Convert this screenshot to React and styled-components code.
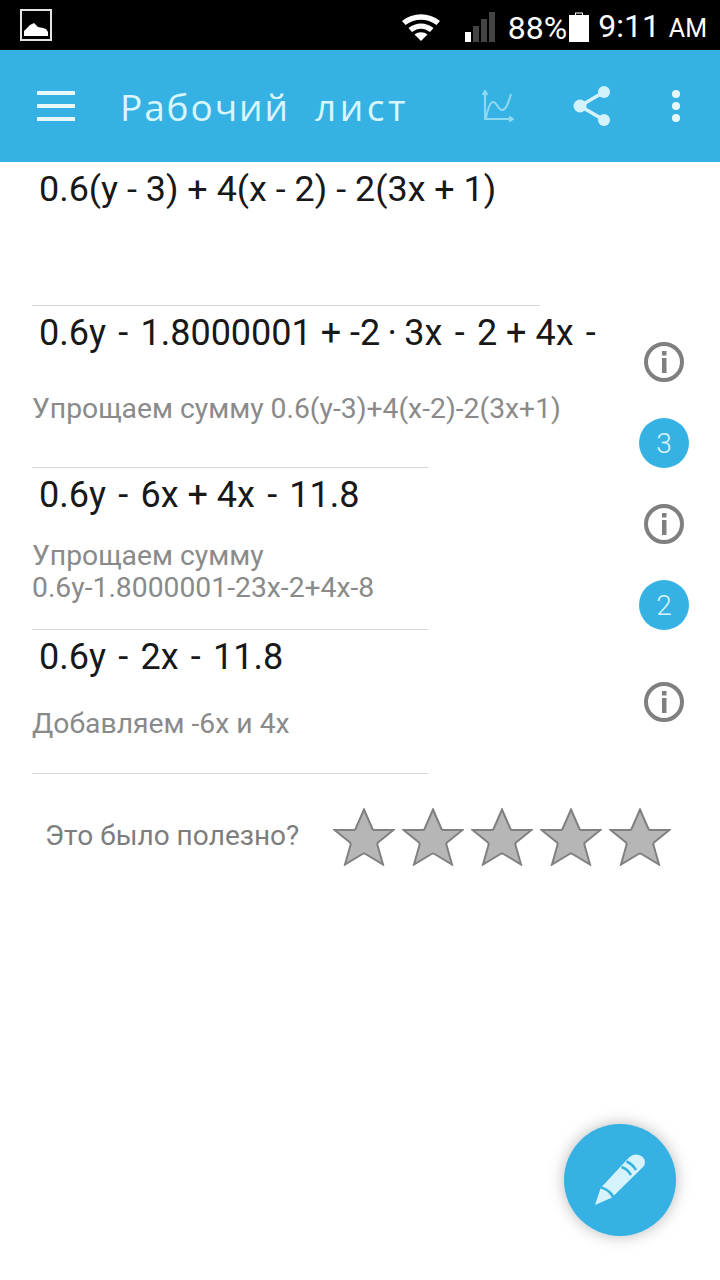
import styled, { createGlobalStyle } from "styled-components";

// minus signs in the steps sit wider apart than the plus signs
const spaced = (expr) => expr.replace(/ - /g, "\u2004-\u2004").replace(/ -$/, "\u2004-");

const steps = [
  {
    expr: "0.6y - 1.8000001 + -2\u2009·\u20093x - 2 + 4x -",
    desc: ["Упрощаем сумму 0.6(y-3)+4(x-2)-2(3x+1)"],
    height: 162,
    ruleWidth: 508,
    descTop: 39,
    infoTop: 37,
    badge: 3,
  },
  {
    expr: "0.6y - 6x + 4x - 11.8",
    desc: ["Упрощаем сумму", "0.6y-1.8000001-23x-2+4x-8"],
    height: 162,
    ruleWidth: 396,
    descTop: 24,
    infoTop: 37,
    badge: 2,
  },
  {
    expr: "0.6y - 2x - 11.8",
    desc: ["Добавляем -6x и 4x"],
    height: 144,
    ruleWidth: 396,
    descTop: 30,
    infoTop: 53,
  },
];

function App() {
  return (
    <Page>
      <GlobalStyle />
      <StatusBar>
        <svg width="34" height="34" viewBox="0 0 34 34">
          <rect x="2" y="2" width="30" height="30" fill="none" stroke="#e4e4e4" strokeWidth="2" />
          <path d="M5 28 V23 L11 17 L15 15 L19 19 L24 20 L27 21 L29 24 V28 Z" fill="#fff" />
        </svg>
        <StatusRight>
          <svg width="40" height="30" viewBox="0 0 40 30">
            <path d="M1 9 C12 0 28 0 39 9 L35.5 13 C26 6 14 6 4.500 13 Z" fill="#fff" />
            <path d="M7.500 16 C15 10 25 10 32.500 16 L29 20 C23 15.500 17 15.500 11 20 Z" fill="#fff" />
            <path d="M13.500 22.500 C17.500 19.500 22.500 19.500 26.500 22.500 L20 29 Z" fill="#fff" />
          </svg>
          <SignalBars>
            <svg width="30" height="30" viewBox="0 0 30 30">
              <rect x="0" y="20" width="6" height="10" fill="#fff" />
              <rect x="8" y="14" width="6" height="16" fill="#444" />
              <rect x="16" y="7" width="6" height="23" fill="#444" />
              <rect x="24" y="0" width="6" height="30" fill="#444" />
            </svg>
          </SignalBars>
          <Percent>88%</Percent>
          <svg width="20" height="30" viewBox="0 0 20 30">
            <path d="M6 0.500 H14 V3 H20 V30 H0 V3 H6 Z M7 1.500 V3 H13 V1.500 Z" fill="#fff" fillRule="evenodd" />
          </svg>
          <Clock>
            9:11<Meridiem>AM</Meridiem>
          </Clock>
        </StatusRight>
      </StatusBar>

      <AppBar>
        <MenuIcon>
          <span />
          <span />
          <span />
        </MenuIcon>
        <Title>
          <TitleWord $spacing={1.9}>Рабочий</TitleWord>
          <TitleWord $spacing={3.6}>лист</TitleWord>
        </Title>
        <Actions>
          <svg width="32" height="32" viewBox="0 0 32 32" fill="none" stroke="#8fd8f2" strokeWidth="2">
            <path d="M3 1 V29 H31" />
            <path d="M0.500 5 L3 1 L5.500 5 M27 26.500 L31 29 L27 31.500" />
            <path d="M4 28 C6 18 8 12 11 12 C15 12 16 20 20 20 C25 20 27 10 29 4" />
          </svg>
          <svg width="40" height="42" viewBox="0 0 40 42">
            <path d="M32 7 L8 21 L32 35" fill="none" stroke="#d4f2fb" strokeWidth="3.500" />
            <circle cx="32" cy="7" r="6" fill="#d4f2fb" />
            <circle cx="8" cy="21" r="6.500" fill="#d4f2fb" />
            <circle cx="32" cy="35" r="6" fill="#d4f2fb" />
          </svg>
          <svg width="12" height="36" viewBox="0 0 12 36">
            <circle cx="6" cy="6" r="4" fill="#e8f8fd" />
            <circle cx="6" cy="18" r="4" fill="#e8f8fd" />
            <circle cx="6" cy="30" r="4" fill="#e8f8fd" />
          </svg>
        </Actions>
      </AppBar>

      <Problem>0.6(y - 3) + 4(x - 2) - 2(3x + 1)</Problem>

      {steps.map((step) => (
        <Step key={step.expr} $height={step.height}>
          <StepMain>
            <Rule $width={step.ruleWidth} />
            <Expression>{spaced(step.expr)}</Expression>
            <Description $top={step.descTop}>
              {step.desc.map((line) => (
                <div key={line}>{line}</div>
              ))}
            </Description>
          </StepMain>
          <StepAside $top={step.infoTop}>
            <InfoIcon>
              <svg width="40" height="40" viewBox="0 0 40 40">
                <circle cx="20" cy="20" r="18" fill="none" stroke="#7f7f7f" strokeWidth="4" />
                <rect x="18" y="9" width="4.500" height="4.500" fill="#7f7f7f" />
                <rect x="18" y="16" width="4.500" height="15" fill="#7f7f7f" />
              </svg>
            </InfoIcon>
            {step.badge && <Badge>{step.badge}</Badge>}
          </StepAside>
        </Step>
      ))}

      <ClosingRule />

      <RatingRow>
        <RatingLabel>Это было полезно?</RatingLabel>
        <Stars>
          {[1, 2, 3, 4, 5].map((n) => (
            <svg key={n} width="62" height="58" viewBox="0 0 62 58">
              <path
                d="M31 1.500 L39.500 21 Q40 22 41.500 22 L60.500 22 L45 34.500 Q44 35.500 44.500 37 L50 56.500 L32.500 46 Q31 45 29.500 46 L12 56.500 L17.500 37 Q18 35.500 17 34.500 L1.500 22 L20.500 22 Q22 22 22.500 21 Z"
                fill="#b6b6b6"
                stroke="#808080"
                strokeWidth="2"
              />
            </svg>
          ))}
        </Stars>
      </RatingRow>

      <Fab>
        <svg width="112" height="112" viewBox="0 0 112 112">
          <path d="M31 81 L36.500 64.500 Q43.500 66 48 73.500 Z" fill="#d6f3fc" />
          <path d="M38 62.500 L65 33.500 Q69.500 29.500 75 31 Q81 33 81 38.500 Q81 41 79 43 L50 71.500 Q46 65 38 62.500 Z" fill="#d6f3fc" />
          <path d="M57.500 43 Q63.500 45 67 51 M62.500 37.500 Q68.500 40 72 46" fill="none" stroke="#35b2e3" strokeWidth="2.500" />
        </svg>
      </Fab>
    </Page>
  );
}

export default App;

const GlobalStyle = createGlobalStyle`
  html, body {
    margin: 0;
    padding: 0;
    background: #fff;
  }
`;

const Page = styled.div`
  position: relative;
  width: 720px;
  height: 1280px;
  overflow: hidden;
  background: #fff;
  font-family: Roboto, "Noto Sans", sans-serif;
  font-kerning: none;
`;

const StatusBar = styled.div`
  height: 50px;
  box-sizing: border-box;
  padding: 8px 13px 0 19px;
  display: flex;
  justify-content: space-between;
  align-items: flex-start;
  background: #000;
  color: #fff;
`;

const StatusRight = styled.div`
  display: flex;
  align-items: center;
  margin-top: 2px;
`;

const SignalBars = styled.div`
  display: flex;
  margin-left: 24px;
`;

const Percent = styled.span`
  margin: 1px 2px 0 13px;
  font-size: 32px;
  line-height: 30px;
`;

const Clock = styled.span`
  margin: 1px 0 0 9px;
  font-size: 32px;
  line-height: 30px;
`;

const Meridiem = styled.span`
  margin-left: 9px;
  font-size: 25px;
`;

const AppBar = styled.div`
  height: 112px;
  box-sizing: border-box;
  padding-left: 37px;
  display: flex;
  align-items: center;
  background: #35b2e3;
`;

const MenuIcon = styled.div`
  width: 38px;
  display: flex;
  flex-direction: column;
  gap: 9px;

  span {
    display: block;
    height: 4px;
    background: #e8f9fd;
  }
`;

const Title = styled.div`
  margin-left: 45px;
  display: flex;
  gap: 25px;
  font-family: "Open Sans", sans-serif;
  font-size: 37px;
  color: #d8f6fd;
`;

const TitleWord = styled.span`
  letter-spacing: ${(p) => p.$spacing}px;
`;

const Actions = styled.div`
  margin-left: auto;
  padding-right: 38px;
  display: flex;
  align-items: center;
  gap: 58px;
`;

const Problem = styled.div`
  height: 143px;
  padding: 6px 0 0 39px;
  box-sizing: border-box;
  font-size: 35.9px;
  line-height: 42px;
  color: #181818;
`;

const Step = styled.div`
  height: ${(p) => p.$height}px;
  display: flex;
  padding-left: 32px;
`;

const StepMain = styled.div`
  width: 576px;
  overflow: hidden;
`;

const Rule = styled.div`
  width: ${(p) => p.$width}px;
  height: 1px;
  background: #d8d8d8;
`;

const Expression = styled.div`
  margin-top: 6px;
  padding-left: 7px;
  font-size: 36px;
  line-height: 42px;
  color: #181818;
  white-space: nowrap;
`;

const Description = styled.div`
  margin-top: ${(p) => p.$top}px;
  font-size: 28.3px;
  line-height: 32px;
  color: #8a8a8a;
`;

const StepAside = styled.div`
  width: 112px;
  padding-top: ${(p) => p.$top}px;
  display: flex;
  flex-direction: column;
  align-items: center;
  gap: 36px;
`;

const InfoIcon = styled.div`
  display: flex;
  width: 40px;
  height: 40px;
`;

const Badge = styled.div`
  width: 50px;
  height: 50px;
  flex: none;
  border-radius: 50%;
  display: flex;
  align-items: center;
  justify-content: center;
  background: #35b2e3;
  color: #d8f6fd;
  font-size: 28px;
  font-weight: 300;
`;

const ClosingRule = styled.div`
  width: 396px;
  height: 1px;
  margin-left: 32px;
  background: #d8d8d8;
`;

const RatingRow = styled.div`
  height: 58px;
  margin-top: 34px;
  padding-left: 45px;
  display: flex;
  align-items: center;
`;

const RatingLabel = styled.div`
  width: 254px;
  margin-bottom: 4px;
  font-size: 28px;
  white-space: nowrap;
  color: #7d7d7d;
`;

const Stars = styled.div`
  margin-left: 34px;
  display: flex;
  gap: 7px;
`;

const Fab = styled.div`
  position: absolute;
  left: 564px;
  top: 1124px;
  width: 112px;
  height: 112px;
  border-radius: 50%;
  background: #35b2e3;
  box-shadow: 0 0 16px rgba(0, 0, 0, 0.28);
`;
